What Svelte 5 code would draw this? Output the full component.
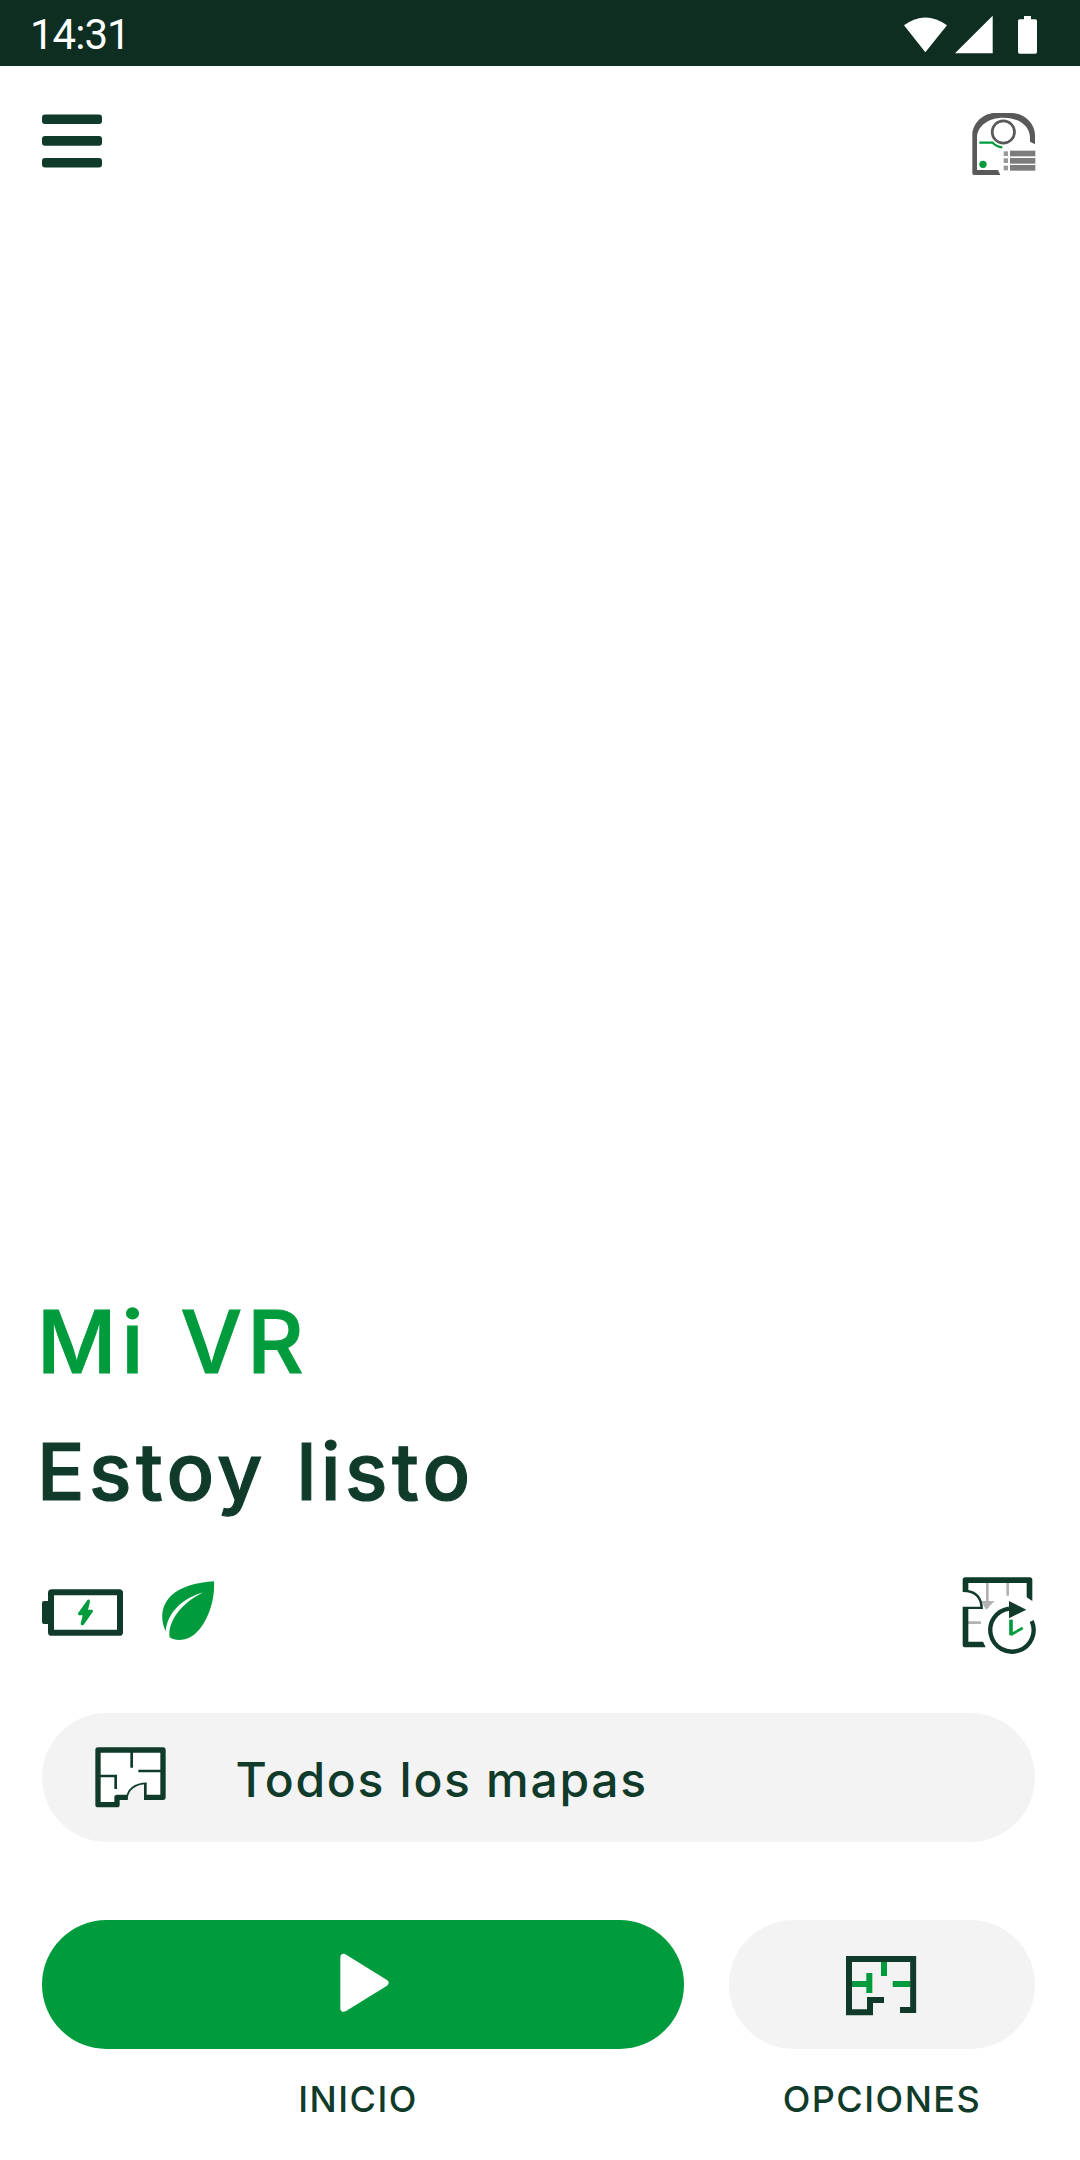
<script>
  let time = '14:31';
  let name = 'Mi VR';
  let status = 'Estoy listo';
  let mapLabel = 'Todos los mapas';
</script>

<div class="screen">
  <div class="status-bar">
    <span class="time">{time}</span>
    <svg class="signals" viewBox="69 45 405 120" width="135" height="40" fill="#fff">
      <path d="M72 76Q136 29 201 76L136 157Z" />
      <path d="M225 160L338 47V160Z" />
      <path d="M432 48H453V58H466Q471 58 471 63V156Q471 161 466 161H419Q414 161 414 156V63Q414 58 419 58H432Z" />
    </svg>
  </div>

  <header>
    <button class="menu" aria-label="Menú">
      <svg viewBox="0 0 60 56" width="60" height="56" fill="#103b2b">
        <rect y="2.400" width="60" height="9.600" rx="3" />
        <rect y="24.100" width="60" height="9.600" rx="3" />
        <rect y="45.900" width="60" height="9.600" rx="3" />
      </svg>
    </button>
    <svg viewBox="276 336 192 192" width="64" height="64" fill="none">
      <path d="M277 405C277 370 309 339 346 339H395C433 339 465 370 465 405V433L450 425V414C450 377 416 353 370 353C325 353 291 378 291 414V510H354L361 525H282Q277 525 277 520Z" fill="#595959" />
      <circle cx="370" cy="396" r="33.500" fill="#fff" stroke="#595959" stroke-width="8" />
      <path d="M298 428H338Q350 440 367 442" stroke="#009b3c" stroke-width="6.500" />
      <circle cx="309" cy="493" r="11" fill="#009b3c" />
      <g fill="#999">
        <rect x="371" y="454" width="13" height="14" />
        <rect x="371" y="475" width="13" height="14" />
        <rect x="371" y="497" width="13" height="14" />
      </g>
      <g fill="#7c7c7c">
        <rect x="390" y="452" width="76" height="17" />
        <rect x="390" y="474" width="76" height="17" />
        <rect x="390" y="495" width="76" height="17" />
      </g>
    </svg>
  </header>

  <main>
    <h1>{name}</h1>
    <h2>{status}</h2>

    <div class="info">
      <svg class="battery" viewBox="66 84 243 147" width="81" height="49">
        <path d="M86 123H72Q66 123 66 130V185Q66 192 72 192H86Z" fill="#103b2b" />
        <rect x="93" y="96.500" width="207" height="122" rx="2" fill="#fff" stroke="#103b2b" stroke-width="18" stroke-linejoin="round" />
        <path d="M203 119Q210 117 210 125L204 149L215 149Q221 150 218 156L191 194Q184 199 182 191L188 166H177Q172 164 175 158Z" fill="#009b3c" />
      </svg>
      <svg class="leaf" viewBox="426 60 159 183" width="53" height="61">
        <path d="M582 64C586 116 565 184 527 220C506 240 471 247 449 232C442 193 476 133 550 97C489 115 443 155 437 214C420 178 423 136 453 107C486 78 530 68 582 64Z" fill="#009b3c" />
      </svg>
      <svg class="schedule" viewBox="66 48 225 234" width="75" height="78" fill="none">
        <path d="M142 64V145M203 64V107M84 188H123" stroke="#b3b3b3" stroke-width="8" />
        <path d="M124 123H164L138 149Z" fill="#b3b3b3" />
        <path d="M68 96V60Q68 52 76 52H269Q277 52 277 60V123L260 112V69H85V90C110 93 129 113 129 147H85V245H129L137 262H76Q68 262 68 254V140H121C120 114 103 96 68 96Z" fill="#103b2b" />
        <path d="M275 183A65 65 0 1 1 207 145.600" stroke="#103b2b" stroke-width="13" />
        <path d="M207 123L259 149L207 175Z" fill="#103b2b" />
        <path d="M213 179V226" stroke="#009b3c" stroke-width="11" />
        <path d="M213 224L248 204" stroke="#009b3c" stroke-width="8" />
      </svg>
    </div>

    <button class="maps">
      <svg viewBox="225 141 213 183" width="71" height="61" fill="none">
        <path d="M234 150H429V292H377V250Q332 250 321 292H291V314H234Z" fill="#fff" />
        <path d="M323 292H291V314H234V150H429V292H372" stroke="#103b2b" stroke-width="16" stroke-linejoin="round" />
        <path d="M335 152V203M355 213H427M238 228H287V267M376 296V250" stroke="#103b2b" stroke-width="8" />
        <path d="M320 299C321 269 345 250 380 250" stroke="#103b2b" stroke-width="5" />
      </svg>
      <span>{mapLabel}</span>
    </button>

    <div class="actions">
      <div class="action start">
        <button aria-label="Iniciar">
          <svg viewBox="180 159 147 180" width="49" height="60">
            <path d="M181 171Q183 159 195 162L321 240Q331 248 321 257L197 334Q183 339 181 327Z" fill="#fff" />
          </svg>
        </button>
        <span>INICIO</span>
      </div>
      <div class="action options">
        <button aria-label="Abrir opciones">
          <svg viewBox="378 165 213 183" width="71" height="61" fill="none">
            <path d="M492 186V228M396 252H448M448 219V279M518 252H571" stroke="#009b3c" stroke-width="18" />
            <path d="M492 300H450V337H387V177H579.500V330H540" stroke="#103b2b" stroke-width="18" />
          </svg>
        </button>
        <span>OPCIONES</span>
      </div>
    </div>
  </main>
</div>

<style>
  :global(body) {
    margin: 0;
    background: #fff;
  }

  .screen {
    display: flex;
    flex-direction: column;
    width: 1080px;
    height: 2160px;
    overflow: hidden;
    background: #fff;
    color: #103b2b;
    font-family: Inter, 'Liberation Sans', sans-serif;
    font-weight: 500;
  }

  svg {
    display: block;
    flex: none;
  }

  button {
    border: 0;
    padding: 0;
    color: inherit;
    font: inherit;
    cursor: pointer;
  }

  .status-bar {
    display: flex;
    justify-content: space-between;
    box-sizing: border-box;
    height: 66px;
    padding: 0 42px 0 30px;
    background: #0e2e22;
  }

  .time {
    color: #fff;
    font: 42px/70px Roboto, sans-serif;
    letter-spacing: -1px;
  }

  .signals {
    margin-top: 15px;
  }

  header {
    display: flex;
    align-items: flex-start;
    justify-content: space-between;
    padding: 46px 44px 0 42px;
  }

  .menu {
    background: none;
  }

  main {
    margin-top: auto;
    padding: 0 45px 0 42px;
  }

  h1,
  h2 {
    margin: 0 0 0 -5px;
    font-weight: 500;
    white-space: nowrap;
    word-spacing: 4px;
  }

  h1 {
    height: 134px;
    color: #009b3c;
    font-size: 87px;
    line-height: 100px;
    letter-spacing: 5px;
    -webkit-text-stroke: 1.200px #009b3c;
  }

  h2 {
    height: 150px;
    font-size: 79px;
    line-height: 90px;
    letter-spacing: 4.400px;
    -webkit-text-stroke: 1.200px #103b2b;
  }

  .info {
    display: flex;
    align-items: center;
    gap: 39px;
    height: 78px;
    margin-bottom: 59px;
    margin-right: -2px;
  }

  .battery {
    margin-bottom: 5px;
  }

  .leaf {
    margin-bottom: 9px;
  }

  .schedule {
    margin-left: auto;
  }

  .maps {
    display: flex;
    align-items: center;
    gap: 69.500px;
    width: 100%;
    height: 129px;
    padding-left: 53px;
    border-radius: 65px;
    background: #f3f3f3;
  }

  .maps span {
    font-size: 48px;
    line-height: 60px;
    letter-spacing: 1.700px;
    padding-top: 5px;
  }

  .actions {
    display: flex;
    gap: 45px;
    margin-top: 78px;
    height: 240px;
  }

  .action {
    display: flex;
    flex-direction: column;
    align-items: center;
    gap: 29px;
  }

  .start {
    width: 642px;
  }

  .options {
    width: 306px;
  }

  .action button {
    display: flex;
    align-items: center;
    justify-content: center;
    width: 100%;
    height: 129px;
    border-radius: 65px;
    background: #f3f3f3;
  }

  .action.start button {
    background: #009b3c;
  }

  .start svg {
    margin-left: 3px;
    margin-top: -3px;
  }

  .start span {
    margin-right: 10px;
  }

  .options svg {
    margin-right: 2px;
    margin-top: 1px;
  }

  .action span {
    font-size: 36px;
    line-height: 42px;
    letter-spacing: 1.500px;
  }
</style>
